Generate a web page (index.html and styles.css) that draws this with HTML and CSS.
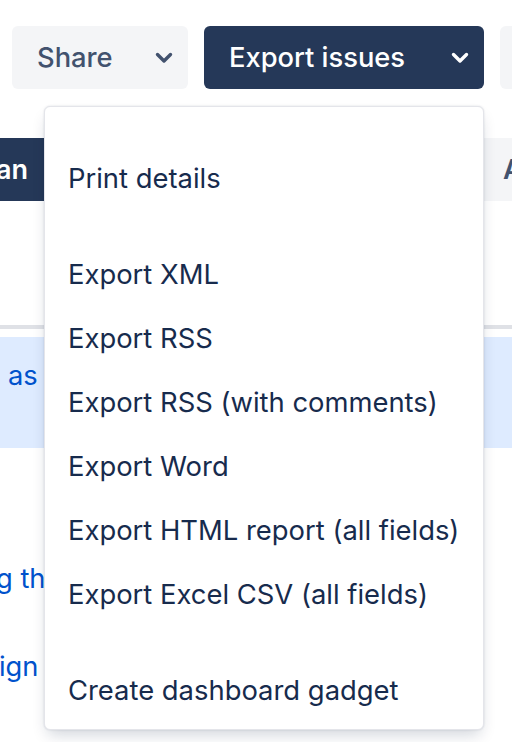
FILE: index.html
```html
<!DOCTYPE html>
<html>
<head>
<meta charset="utf-8">
<link rel="stylesheet" href="styles.css">
</head>
<body>
<div class="page">
  <div class="toolbar">
    <button class="btn btn-light">
      <span class="btn-label">Share</span>
      <svg class="chev" viewBox="0 0 20 20" width="20" height="20"><path d="M3.5 6.5 L10 13 L16.5 6.5" fill="none" stroke="currentColor" stroke-width="3.4" stroke-linecap="round" stroke-linejoin="round"/></svg>
    </button>
    <button class="btn btn-dark">
      <span class="btn-label">Export issues</span>
      <svg class="chev" viewBox="0 0 20 20" width="20" height="20"><path d="M3.5 6.5 L10 13 L16.5 6.5" fill="none" stroke="currentColor" stroke-width="3.4" stroke-linecap="round" stroke-linejoin="round"/></svg>
    </button>
    <button class="btn btn-light btn-cut"></button>
  </div>

  <div class="subbar">
    <div class="sub-dark"><span>an</span></div>
    <div class="sub-gap"></div>
    <div class="sub-light"><span>A</span></div>
  </div>

  <div class="divider"></div>
  <div class="row-selected"><span class="link">as</span></div>
  <div class="row-plain row-a"><span class="link">g th</span></div>
  <div class="row-plain row-b"><span class="link">ign</span></div>

  <div class="menu">
    <div class="menu-section first">
      <div class="menu-item">Print details</div>
    </div>
    <div class="menu-section">
      <div class="menu-item">Export XML</div>
      <div class="menu-item">Export RSS</div>
      <div class="menu-item">Export RSS (with comments)</div>
      <div class="menu-item">Export Word</div>
      <div class="menu-item">Export HTML report (all fields)</div>
      <div class="menu-item">Export Excel CSV (all fields)</div>
    </div>
    <div class="menu-section">
      <div class="menu-item">Create dashboard gadget</div>
    </div>
  </div>
</div>
</body>
</html>
```

FILE: styles.css
```css
* { box-sizing: border-box; }
html, body {
  margin: 0;
  padding: 0;
  background: #ffffff;
}
body {
  width: 512px;
  height: 742px;
  overflow: hidden;
  font-family: Inter, "Noto Sans", "Liberation Sans", sans-serif;
}
.page {
  position: relative;
  width: 512px;
  height: 742px;
  overflow: hidden;
}
.toolbar {
  display: flex;
  gap: 16px;
  padding: 26px 0 0 12px;
  height: 89px;
}
.btn {
  height: 63px;
  border: none;
  border-radius: 6px;
  display: flex;
  align-items: center;
  justify-content: space-between;
  padding: 0 14px 0 25px;
  font-family: inherit;
  font-size: 27.3px;
  font-weight: 500;
  flex: none;
}
.btn-light {
  background: #f4f5f7;
  color: #42526e;
  width: 176px;
}
.btn-dark {
  background: #253858;
  color: #ffffff;
  width: 280px;
}
.btn-cut {
  width: 60px;
}
.chev { display: block; }
.subbar {
  display: flex;
  height: 63px;
  margin-top: 49px;
}
.sub-dark {
  flex: none;
  width: 44px;
  background: #253858;
  color: #fff;
  font-size: 27px;
  font-weight: 600;
  display: flex;
  align-items: center;
  justify-content: flex-end;
  padding-right: 16px;
  overflow: hidden;
  white-space: nowrap;
}
.sub-gap { flex: none; width: 440px; }
.sub-light {
  flex: 1;
  min-width: 0;
  overflow: hidden;
  background: #f4f5f7;
  color: #42526e;
  font-size: 27px;
  font-weight: 600;
  display: flex;
  align-items: center;
  padding-left: 19px;
  white-space: nowrap;
}
.divider {
  height: 4px;
  background: #dfe1e6;
  margin-top: 124px;
}
.row-selected {
  margin-top: 8px;
  height: 111px;
  background: #deebff;
  padding: 22px 0 0 8px;
}
.link {
  color: #0052cc;
  font-size: 27.3px;
  white-space: nowrap;
}
.row-plain {
  white-space: nowrap;
}
.row-a {
  margin-top: 114px;
  margin-left: -4px;
}
.row-b {
  margin-top: 55px;
  margin-left: -1px;
}
.menu {
  position: absolute;
  left: 44px;
  top: 106px;
  width: 440px;
  height: 624px;
  background: #ffffff;
  border: 1px solid #e4e5ea;
  border-radius: 6px;
  box-shadow: 0 8px 16px -4px rgba(9, 30, 66, 0.2), 0 0 2px rgba(9, 30, 66, 0.15);
  padding: 8px 0;
}
.menu-section {
  padding-top: 32px;
}
.menu-section.first {
  padding-top: 31px;
}
.menu-item {
  height: 64px;
  display: flex;
  align-items: center;
  padding-left: 23px;
  color: #172b4d;
  font-size: 27.4px;
  white-space: nowrap;
}
```
